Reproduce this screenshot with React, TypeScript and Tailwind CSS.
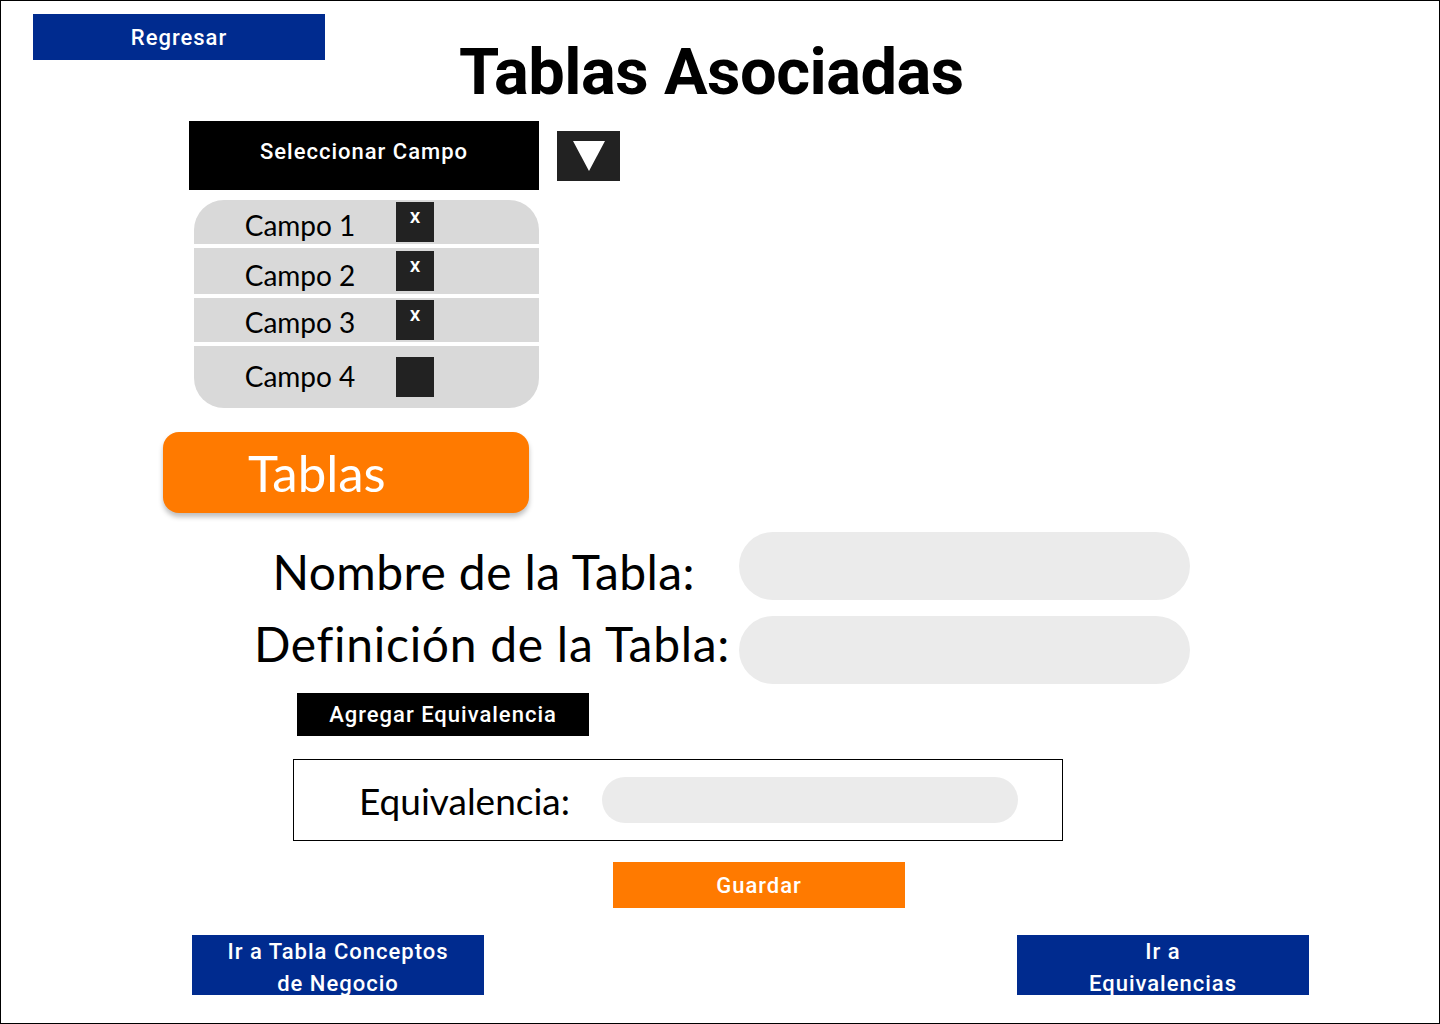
const btnFont = { fontFamily: 'Roboto, "Noto Sans", sans-serif' };

const campos = [
  { label: 'Campo 1', h: 'h-[44px]', shift: 'pt-[6px]', checked: true },
  { label: 'Campo 2', h: 'h-[46px]', shift: 'pt-[7px]', checked: true },
  { label: 'Campo 3', h: 'h-[44px]', shift: 'pt-[4px]', checked: true },
  { label: 'Campo 4', h: 'h-[62px]', shift: 'pb-[2px]', checked: false },
];

export default function App() {
  return (
    <div
      className="relative h-[1024px] w-[1440px] overflow-hidden border border-black bg-white text-black"
      style={{ fontFamily: 'Lato, "Noto Sans", sans-serif' }}
    >
      {/* header */}
      <div className="flex h-[120px] items-start">
        <button
          type="button"
          className="ml-[32px] mt-[13px] h-[46px] w-[292px] bg-[#002b8f] text-[22px] font-medium tracking-[1px] text-white"
          style={btnFont}
        >
          Regresar
        </button>
        <h1
          className="ml-[134px] mt-[39px] text-[65px] font-bold leading-none tracking-[-0.5px]"
          style={btnFont}
        >
          Tablas Asociadas
        </h1>
      </div>

      {/* selector */}
      <div className="ml-[188px] flex items-start">
        <div
          className="flex h-[69px] w-[350px] items-center justify-center bg-black pb-[8px] text-[22px] font-medium tracking-[1px] text-white"
          style={btnFont}
        >
          Seleccionar Campo
        </div>
        <button type="button" className="ml-[18px] mt-[10px] flex h-[50px] w-[63px] items-center justify-center bg-[#222222]">
          <svg width="32" height="30" viewBox="0 0 32 30">
            <polygon points="0,0 32,0 16,30" fill="#ffffff" />
          </svg>
        </button>
      </div>

      <div className="ml-[193px] mt-[10px] flex w-[345px] flex-col gap-[4px] overflow-hidden rounded-[30px] bg-white">
        {campos.map((c) => (
          <div key={c.label} className={`flex ${c.h} items-center bg-[#d9d9d9]`}>
            <span className={`w-[202px] pl-[10px] ${c.shift} text-center text-[28px] leading-none`}>{c.label}</span>
            <span
              className="flex h-[40px] w-[38px] items-start justify-center bg-[#222222] pt-[4px] text-[21px] font-medium leading-none text-white"
              style={btnFont}
            >
              {c.checked ? 'x' : ''}
            </span>
          </div>
        ))}
      </div>

      {/* tablas */}
      <div className="ml-[162px] mt-[24px] flex h-[81px] w-[366px] items-center rounded-[16px] bg-[#ff7a00] pl-[85px] text-[51px] leading-none text-white shadow-[0_4px_5px_rgba(0,0,0,0.25)]">
        Tablas
      </div>

      <div className="mt-[19px] flex items-center">
        <span className="w-[738px] pr-[44px] pt-[12px] text-right text-[48px] leading-none tracking-[0.4px]">Nombre de la Tabla:</span>
        <div className="h-[68px] w-[451px] rounded-full bg-[#ebebeb]" />
      </div>
      <div className="mt-[16px] flex items-center">
        <span className="w-[738px] pb-[12px] pr-[9px] text-right text-[48px] leading-none tracking-[0.7px]">Definición de la Tabla:</span>
        <div className="h-[68px] w-[451px] rounded-full bg-[#ebebeb]" />
      </div>

      <button
        type="button"
        className="ml-[296px] mt-[9px] flex h-[43px] w-[292px] items-center justify-center bg-black text-[22px] font-medium tracking-[1px] text-white"
        style={btnFont}
      >
        Agregar Equivalencia
      </button>

      <div className="ml-[292px] mt-[23px] flex h-[82px] w-[770px] items-center border border-black pl-[65px]">
        <span className="w-[214px] text-[37px] leading-none">Equivalencia:</span>
        <div className="ml-[29px] h-[46px] w-[416px] rounded-full bg-[#ebebeb]" />
      </div>

      <button
        type="button"
        className="ml-[612px] mt-[21px] flex h-[46px] w-[292px] items-center justify-center bg-[#ff7a00] text-[22px] font-medium tracking-[1px] text-white"
        style={btnFont}
      >
        Guardar
      </button>

      <div className="ml-[191px] mt-[27px] flex gap-[533px]">
        <button
          type="button"
          className="flex h-[60px] w-[292px] flex-col items-center justify-start bg-[#002b8f] pt-[1px] text-[22px] font-medium leading-[32px] tracking-[1px] text-white"
          style={btnFont}
        >
          <span>Ir a Tabla Conceptos</span>
          <span>de Negocio</span>
        </button>
        <button
          type="button"
          className="flex h-[60px] w-[292px] flex-col items-center justify-start bg-[#002b8f] pt-[1px] text-[22px] font-medium leading-[32px] tracking-[1px] text-white"
          style={btnFont}
        >
          <span>Ir a</span>
          <span>Equivalencias</span>
        </button>
      </div>
    </div>
  );
}
